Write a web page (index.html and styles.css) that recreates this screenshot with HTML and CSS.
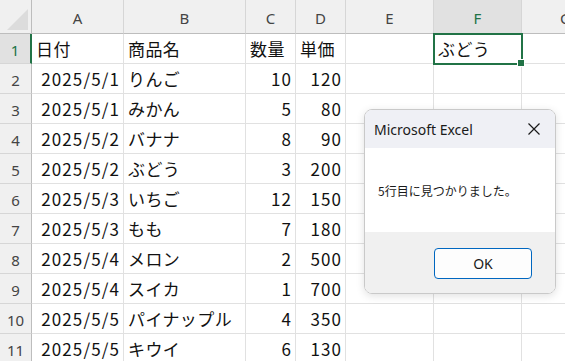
FILE: index.html
```html
<!DOCTYPE html>
<html lang="ja">
<head>
    <meta charset="UTF-8">
    <title>Excel</title>
    <link rel="stylesheet" href="styles.css">
</head>
<body>
    <div class="sheet">
        <!-- en-têtes de colonnes -->
        <div class="hd corner"><span class="tri"></span></div>
        <div class="hd col">A</div>
        <div class="hd col">B</div>
        <div class="hd col">C</div>
        <div class="hd col">D</div>
        <div class="hd col">E</div>
        <div class="hd col sel">F</div>
        <div class="hd col">G</div>

        <div class="hd row sel-row">1</div>
        <div class="c">日付</div>
        <div class="c">商品名</div>
        <div class="c">数量</div>
        <div class="c">単価</div>
        <div class="c"></div>
        <div class="c active">ぶどう<span class="handle"></span></div>
        <div class="c"></div>

        <div class="hd row">2</div>
        <div class="c r">2025/5/1</div><div class="c">りんご</div><div class="c r">10</div><div class="c r">120</div><div class="c"></div><div class="c"></div><div class="c"></div>
        <div class="hd row">3</div>
        <div class="c r">2025/5/1</div><div class="c">みかん</div><div class="c r">5</div><div class="c r">80</div><div class="c"></div><div class="c"></div><div class="c"></div>
        <div class="hd row">4</div>
        <div class="c r">2025/5/2</div><div class="c">バナナ</div><div class="c r">8</div><div class="c r">90</div><div class="c"></div><div class="c"></div><div class="c"></div>
        <div class="hd row">5</div>
        <div class="c r">2025/5/2</div><div class="c">ぶどう</div><div class="c r">3</div><div class="c r">200</div><div class="c"></div><div class="c"></div><div class="c"></div>
        <div class="hd row">6</div>
        <div class="c r">2025/5/3</div><div class="c">いちご</div><div class="c r">12</div><div class="c r">150</div><div class="c"></div><div class="c"></div><div class="c"></div>
        <div class="hd row">7</div>
        <div class="c r">2025/5/3</div><div class="c">もも</div><div class="c r">7</div><div class="c r">180</div><div class="c"></div><div class="c"></div><div class="c"></div>
        <div class="hd row">8</div>
        <div class="c r">2025/5/4</div><div class="c">メロン</div><div class="c r">2</div><div class="c r">500</div><div class="c"></div><div class="c"></div><div class="c"></div>
        <div class="hd row">9</div>
        <div class="c r">2025/5/4</div><div class="c">スイカ</div><div class="c r">1</div><div class="c r">700</div><div class="c"></div><div class="c"></div><div class="c"></div>
        <div class="hd row">10</div>
        <div class="c r">2025/5/5</div><div class="c">パイナップル</div><div class="c r">4</div><div class="c r">350</div><div class="c"></div><div class="c"></div><div class="c"></div>
        <div class="hd row">11</div>
        <div class="c r">2025/5/5</div><div class="c">キウイ</div><div class="c r">6</div><div class="c r">130</div><div class="c"></div><div class="c"></div><div class="c"></div>
    </div>

    <!-- boîte de message -->
    <div class="msgbox">
        <div class="msg-title">
            <span>Microsoft Excel</span>
            <svg class="close" width="14" height="14" viewBox="0 0 14 14">
                <path d="M1.5 1.5 L12.5 12.5 M12.5 1.5 L1.5 12.5" stroke="#1a1a1a" stroke-width="1.2" fill="none"/>
            </svg>
        </div>
        <div class="msg-body">5行目に見つかりました。</div>
        <div class="msg-foot">
            <button class="ok">OK</button>
        </div>
    </div>
</body>
</html>
```

FILE: styles.css
```css
body {
    margin: 0;
    background: #fff;
    overflow: hidden;
    font-family: "Noto Sans CJK JP", "Noto Sans", sans-serif;
}
.sheet {
    display: grid;
    grid-template-columns: 32px 92px 122px 50px 50px 88px 88px 88px;
    grid-template-rows: 34px;
    grid-auto-rows: 30px;
}
.hd {
    background: #f0f0f0;
    color: #444;
    font-family: "Noto Sans", sans-serif;
    font-size: 15px;
    box-sizing: border-box;
    border-right: 1px solid #d6d6d6;
    border-bottom: 1px solid #d6d6d6;
    display: flex;
    align-items: center;
    justify-content: center;
}
.hd.col {
    border-bottom: 1px solid #bdbdbd;
    padding-top: 2px;
}
.hd.row {
    border-right: 1px solid #bdbdbd;
    padding-top: 2px;
}
.hd.sel {
    background: #e1e1e1;
    color: #217346;
}
.sel-row {
    background: #e1e1e1 !important;
    color: #217346 !important;
    border-right: 2px solid #217346 !important;
}
.corner {
    position: relative;
    border-bottom: 1px solid #bdbdbd;
    border-right: 1px solid #bdbdbd;
}
.tri {
    position: absolute;
    right: 3px;
    bottom: 3px;
    width: 0;
    height: 0;
    border-left: 21px solid transparent;
    border-bottom: 21px solid #dcdcdc;
}
.c {
    box-sizing: border-box;
    border-right: 1px solid #e1e1e1;
    border-bottom: 1px solid #e1e1e1;
    font-size: 17px;
    color: #111;
    padding: 0 4px;
    display: flex;
    align-items: center;
    white-space: nowrap;
    letter-spacing: 0.4px;
}
.c.r {
    justify-content: flex-end;
    letter-spacing: 1.1px;
    padding-right: 3px;
}
.active {
    position: relative;
    outline: 2px solid #217346;
    outline-offset: -1px;
    z-index: 1;
}
.handle {
    position: absolute;
    right: -4px;
    bottom: -4px;
    width: 6px;
    height: 6px;
    background: #217346;
    border: 1px solid #fff;
}

/* boîte de message */
.msgbox {
    position: absolute;
    left: 364px;
    top: 109px;
    width: 192px;
    height: 185px;
    box-sizing: border-box;
    border: 1px solid #c9c9c9;
    border-radius: 8px;
    overflow: hidden;
    box-shadow: 0 2px 8px rgba(0, 0, 0, 0.12);
    display: flex;
    flex-direction: column;
    font-family: "Noto Sans", "Noto Sans CJK JP", sans-serif;
}
.msg-title {
    height: 38px;
    background: #eff0f5;
    display: flex;
    align-items: center;
    justify-content: space-between;
    padding: 0 14px 0 9px;
    font-size: 14px;
    color: #1a1a1a;
}
.msg-body {
    height: 84px;
    background: #fff;
    display: flex;
    align-items: center;
    padding-left: 13px;
    font-size: 12px;
    color: #1a1a1a;
    font-family: "Noto Sans CJK JP", sans-serif;
}
.msg-foot {
    flex: 1;
    background: #f0f0f0;
    display: flex;
    justify-content: flex-end;
    align-items: flex-start;
    padding: 16px 23px 0 0;
}
.ok {
    width: 98px;
    height: 31px;
    border: 1px solid #0067c0;
    border-radius: 4px;
    background: #fdfdfd;
    font-family: "Noto Sans", sans-serif;
    font-size: 14px;
    color: #1a1a1a;
}
```
